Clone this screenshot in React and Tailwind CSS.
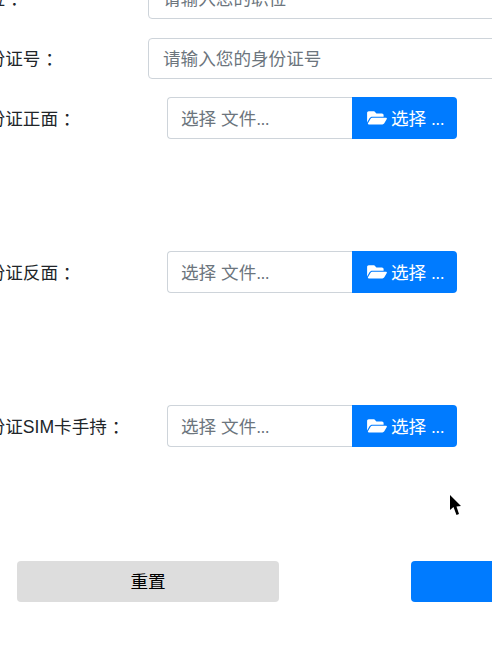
import { FaFolderOpen } from 'react-icons/fa';

const font = "font-['Liberation_Sans','Noto_Sans_CJK_SC',sans-serif]";

function TextRow({ label, placeholder, className }) {
  return (
    <div className={`flex items-center h-[41px] ${className}`}>
      <label className="w-[178px] shrink-0 pt-[2px] text-[17.6px] text-[#212529]">{label}</label>
      <input
        readOnly
        placeholder={placeholder}
        className="w-[400px] shrink-0 h-[41px] pt-[2px] pl-[14px] pr-[14px] text-[17.6px] bg-white border border-[#ced4da] rounded-[4px] outline-none placeholder:text-[#6c757d]"
      />
    </div>
  );
}

function FileRow({ label, className }) {
  return (
    <div className={`flex items-center h-[42px] ${className}`}>
      <label className="w-[197px] shrink-0 pt-[2px] text-[17.6px] text-[#212529]">{label}</label>
      <div className="flex w-[290px] h-[42px] shrink-0">
        <div className="flex items-center flex-1 pt-[2px] pl-[13px] text-[17.6px] text-[#6c757d] bg-white border border-r-0 border-[#ced4da] rounded-l-[4px]">
          <span>选择 文件<span className="tracking-[-0.6px]">...</span></span>
        </div>
        <button className="flex items-center gap-[4px] w-[105px] pt-[2px] pl-[15px] text-[17.6px] text-white bg-[#007bff] rounded-r-[4px]">
          <FaFolderOpen className="text-[17.6px] w-[20px] -mt-[2px]" />
          <span>选择 <span className="tracking-[-0.6px]">...</span></span>
        </button>
      </div>
    </div>
  );
}

export default function App() {
  return (
    <div className={`relative w-[492px] h-[651px] overflow-hidden bg-white ${font}`}>
      <div className="w-[700px] -ml-[30px] -mt-[22px] flex flex-col">
        <TextRow label="职位 ：" placeholder="请输入您的职位" />
        <TextRow label="身份证号 ：" placeholder="请输入您的身份证号" className="mt-[19px]" />
        <FileRow label="身份证正面 ：" className="mt-[18px]" />
        <FileRow label="身份证反面 ：" className="mt-[112px]" />
        <FileRow label="身份证SIM卡手持 ：" className="mt-[112px]" />
        <div className="flex mt-[114px] ml-[47px] h-[41px]">
          <button className="w-[262px] shrink-0 pt-[2px] text-[17.6px] text-black bg-[#dddddd] rounded-[4px]">重置</button>
          <button className="w-[200px] shrink-0 ml-[132px] bg-[#007bff] rounded-[4px]"></button>
        </div>
      </div>
      <svg className="absolute left-[449px] top-[495px]" width="13" height="21" viewBox="0 0 13 21">
        <path d="M1 0 L1 15 L4.5 12 L7.5 20 L10 19 L7.5 11.5 L12 11 Z" fill="#000" />
      </svg>
    </div>
  );
}
